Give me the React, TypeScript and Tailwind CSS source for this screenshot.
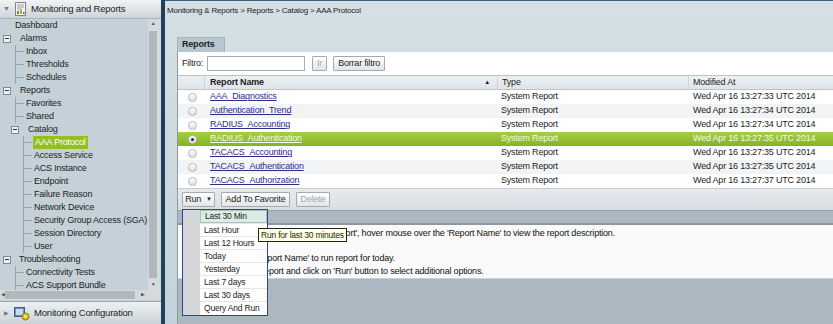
import React from "react"

const reports = [
  ["AAA_Diagnostics", "Wed Apr 16 13:27:33 UTC 2014"],
  ["Authentication_Trend", "Wed Apr 16 13:27:34 UTC 2014"],
  ["RADIUS_Accounting", "Wed Apr 16 13:27:34 UTC 2014"],
  ["RADIUS_Authentication", "Wed Apr 16 13:27:35 UTC 2014"],
  ["TACACS_Accounting", "Wed Apr 16 13:27:35 UTC 2014"],
  ["TACACS_Authentication", "Wed Apr 16 13:27:35 UTC 2014"],
  ["TACACS_Authorization", "Wed Apr 16 13:27:37 UTC 2014"],
]

const runOptions = [
  "Last 30 Min",
  "Last Hour",
  "Last 12 Hours",
  "Today",
  "Yesterday",
  "Last 7 days",
  "Last 30 days",
  "Query And Run",
]

function Box() {
  return (
    <span className="flex h-[8px] w-[8px] shrink-0 items-center justify-center border border-[#7f8b93] bg-[#eef1f3]">
      <span className="h-px w-[4px] bg-[#333]" />
    </span>
  )
}

function Leaf({ label, hl }: { label: string; hl?: boolean }) {
  return (
    <div className="flex h-[13px] items-center">
      <span className="w-[8px] shrink-0 border-t border-[#98a5ad]" />
      <span className={hl ? "ml-[1px] bg-[#93c01f] px-[2px] leading-[13px] text-white" : "ml-[2px]"}>{label}</span>
    </div>
  )
}

function Radio({ on }: { on?: boolean }) {
  return (
    <span className="flex h-[9px] w-[9px] items-center justify-center rounded-full border border-[#b3b8bc] bg-gradient-to-b from-white to-[#dcdfe1]">
      {on && <span className="h-[3px] w-[3px] rounded-full bg-[#222]" />}
    </span>
  )
}

function Btn({ children, w, dim }: { children: React.ReactNode; w: string; dim?: boolean }) {
  return (
    <div
      className={`flex h-[15px] items-center justify-center rounded-[1px] border border-[#a3abb1] bg-gradient-to-b from-white to-[#e2e5e8] ${w} ${dim ? "text-[#a2a8ad]" : "text-[#222]"}`}
    >
      {children}
    </div>
  )
}

export default function App() {
  return (
    <div className="relative flex h-[324px] w-[833px] overflow-hidden font-['Liberation_Sans',Arial,sans-serif] text-[9px] tracking-[-0.2px] text-[#1d1d1d]">
      {/* left navigation */}
      <div className="flex w-[161px] shrink-0 flex-col bg-[#c5d1d8]">
        <div className="flex h-[19px] items-center border-b border-[#a9b5bc] bg-gradient-to-b from-[#f1f3f4] to-[#cdd5da] pl-[3px]">
          <span className="w-[9px] text-[7px] text-[#6b7a84]">▼</span>
          <svg width="13" height="14" viewBox="0 0 13 14" className="ml-[2px]">
            <rect x="1.5" y="0.5" width="10" height="13" fill="#f4f4f0" stroke="#7d8489" />
            <path d="M3 3h7M3 5h7M3 7h5" stroke="#9aa0a4" />
            <rect x="3" y="9" width="2" height="3" fill="#6c8b2a" />
            <rect x="6" y="8" width="2" height="4" fill="#c9a227" />
            <rect x="9" y="10" width="1.5" height="2" fill="#4f6f9a" />
          </svg>
          <span className="ml-[4px] text-[9.5px]">Monitoring and Reports</span>
        </div>

        <div className="flex min-h-0 flex-1">
          <div className="min-w-0 flex-1 overflow-hidden">
            <div className="flex h-[13px] items-center pl-[15px]">Dashboard</div>
            <div className="flex h-[13px] items-center pl-[3px]">
              <Box />
              <span className="ml-[9px]">Alarms</span>
            </div>
            <div className="ml-[15px] border-l border-[#98a5ad]">
              <Leaf label="Inbox" />
              <Leaf label="Thresholds" />
              <Leaf label="Schedules" />
            </div>
            <div className="flex h-[13px] items-center pl-[3px]">
              <Box />
              <span className="ml-[9px]">Reports</span>
            </div>
            <div className="ml-[15px] border-l border-[#98a5ad]">
              <Leaf label="Favorites" />
              <Leaf label="Shared" />
            </div>
            <div className="flex h-[13px] items-center pl-[11px]">
              <Box />
              <span className="ml-[9px]">Catalog</span>
            </div>
            <div className="ml-[23px] border-l border-[#98a5ad]">
              <Leaf label="AAA Protocol" hl />
              <Leaf label="Access Service" />
              <Leaf label="ACS Instance" />
              <Leaf label="Endpoint" />
              <Leaf label="Failure Reason" />
              <Leaf label="Network Device" />
              <Leaf label="Security Group Access (SGA)" />
              <Leaf label="Session Directory" />
              <Leaf label="User" />
            </div>
            <div className="flex h-[13px] items-center pl-[3px]">
              <Box />
              <span className="ml-[8px]">Troubleshooting</span>
            </div>
            <div className="ml-[15px] border-l border-[#98a5ad]">
              <Leaf label="Connectivity Tests" />
              <Leaf label="ACS Support Bundle" />
            </div>
          </div>
          <div className="flex w-[10px] shrink-0 flex-col bg-[#d6dadd]">
            <div className="flex h-[10px] items-center justify-center text-[5px] text-[#555]">▲</div>
            <div className="flex-1 px-[1px] py-[2px]">
              <div className="h-full bg-[#b2b7bb]" />
            </div>
            <div className="flex h-[10px] items-center justify-center text-[5px] text-[#555]">▼</div>
          </div>
          <div className="w-[3px] shrink-0 bg-[#d2dbe0]" />
        </div>

        <div className="flex h-[10px] shrink-0 items-center bg-[#d6dadd]">
          <span className="w-[5px] text-center text-[5px] text-[#555]">◀</span>
          <div className="h-[8px] w-[130px] bg-[#b2b7bb]" />
          <span className="ml-[6px] text-[5px] text-[#555]">▶</span>
        </div>

        <div className="mt-[1px] flex h-[23px] shrink-0 items-center border-t border-[#9aa6ad] bg-gradient-to-b from-[#eef1f2] to-[#cbd3d8] pl-[4px]">
          <span className="w-[9px] text-[6px] text-[#6b7a84]">▶</span>
          <svg width="16" height="15" viewBox="0 0 16 15" className="ml-[1px]">
            <rect x="0.5" y="1.5" width="10" height="9" fill="#6d8fbf" stroke="#3f5f8c" />
            <rect x="2" y="3" width="7" height="6" fill="#c9daf0" />
            <circle cx="11.5" cy="10.5" r="3.5" fill="#e6b91e" stroke="#9b7a10" />
            <circle cx="11.5" cy="10.5" r="1.2" fill="#fff4c0" />
          </svg>
          <span className="ml-[4px] text-[9.5px]">Monitoring Configuration</span>
        </div>
      </div>

      <div className="w-[4px] shrink-0 bg-[#21405c]" />

      {/* main area */}
      <div className="flex min-w-0 flex-1 flex-col border-t border-[#3a5f80] bg-gradient-to-b from-[#d5e0e5] to-[#c3d2da]">
        <div className="flex h-[19px] shrink-0 items-center pl-[2px] text-[8px]">
          Monitoring &amp; Reports &gt; Reports &gt; Catalog &gt; AAA Protocol
        </div>

        <div className="ml-[12px] mt-[17px] flex h-[15px] shrink-0">
          <div className="flex w-[48px] items-center border border-b-0 border-[#a6b4be] bg-[#b7c7d2] pl-[4px] font-bold">
            Reports
          </div>
        </div>

        <div className="ml-[12px] flex min-h-0 flex-1 flex-col border-l border-[#8f9ba3] bg-white">
          <div className="flex h-[23px] shrink-0 items-center pl-[4px]">
            <span>Filtro:</span>
            <div className="ml-[4px] h-[15px] w-[98px] border border-[#a7aeb3] bg-white" />
            <Btn w="ml-[7px] w-[15px]" dim>
              Ir
            </Btn>
            <Btn w="ml-[6px] w-[52px]">Borrar filtro</Btn>
          </div>

          <div className="flex h-[15px] shrink-0 border-y border-[#bcc4ca] bg-gradient-to-b from-[#eef1f3] to-[#dfe4e8]">
            <div className="w-[26px]" />
            <div className="flex w-[293px] items-center justify-between border-l border-[#cdd3d8] pl-[5px] pr-[7px] font-bold">
              <span>Report Name</span>
              <span className="text-[6px]">▲</span>
            </div>
            <div className="flex w-[191px] items-center border-l border-[#cdd3d8] pl-[4px]">Type</div>
            <div className="flex flex-1 items-center border-l border-[#cdd3d8] pl-[4px]">Modified At</div>
          </div>

          {reports.map(([name, date], i) => {
            const sel = i === 3
            return (
              <div
                key={name}
                className={`flex h-[14px] shrink-0 items-center ${
                  sel
                    ? "bg-gradient-to-b from-[#a6cf42] to-[#86b224] text-[#f3f9e4]"
                    : i % 2 === 1
                      ? "bg-[#f1f3f5]"
                      : "bg-white"
                }`}
              >
                <div className="flex w-[26px] justify-center pl-[2px]">
                  <Radio on={sel} />
                </div>
                <div className="w-[293px] pl-[6px]">
                  <span className={`underline ${sel ? "text-[#f3f9e4]" : "text-[#2d2d8a]"}`}>{name}</span>
                </div>
                <div className="w-[191px] pl-[4px]">System Report</div>
                <div className="flex-1 pl-[5px]">{date}</div>
              </div>
            )
          })}

          <div className="flex h-[22px] shrink-0 items-center border-t border-[#c6cdd2] bg-gradient-to-b from-[#e6eaed] to-[#d8dee3] pl-[4px]">
            <Btn w="w-[33px]">
              Run <span className="ml-[5px] text-[6px]">▼</span>
            </Btn>
            <Btn w="ml-[6px] w-[69px]">Add To Favorite</Btn>
            <Btn w="ml-[6px] w-[34px]" dim>
              Delete
            </Btn>
          </div>

          <div className="flex-1 border-t border-[#95a2ab] bg-[#abb8c1] pt-[12px]">
            <div className="h-[56px] border-t-2 border-b border-[#8b98a1] border-b-[#c9d1d6] bg-[#fafafa] pt-[2px] text-[9px] leading-[12.5px] text-[#111]">
              <div className="pl-[52px]">To view description of the 'Report', hover mouse over the 'Report Name' to view the report description.</div>
              <div className="h-[12.5px]" />
              <div className="pl-[44px]">Click on 'Report Name' to run report for today.</div>
              <div className="pl-[43px]">Select the report and click on 'Run' button to select additional options.</div>
            </div>
          </div>
        </div>
      </div>

      {/* Run dropdown menu */}
      <div className="absolute left-[182px] top-[209px] flex h-[107px] w-[86px] border border-[#33438a] bg-white text-[8.5px]">
        <div className="w-[17px] shrink-0 bg-[#d3d7da]" />
        <div className="flex flex-1 flex-col">
          {runOptions.map((o, i) => (
            <div
              key={o}
              className={`flex h-[13px] items-center pl-[4px] ${
                i === 0 ? "border border-[#a8c3b7] bg-[#dcece5]" : "border-t border-[#e4e7e9]"
              }`}
            >
              {o}
            </div>
          ))}
        </div>
      </div>

      {/* tooltip */}
      <div className="absolute left-[258px] top-[228px] flex h-[14px] items-center border border-[#222] bg-[#ffffe1] px-[2px] text-[8.5px]">
        Run for last 30 minutes
      </div>
    </div>
  )
}
